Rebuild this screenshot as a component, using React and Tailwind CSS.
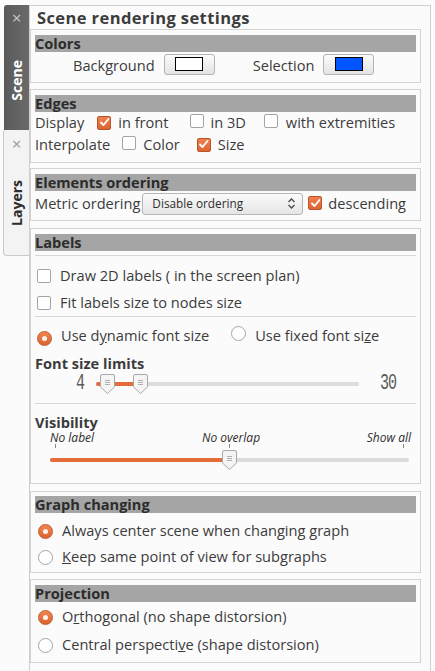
import React from "react";

const font = { fontFamily: '"Open Sans", "DejaVu Sans", sans-serif' };
const lcd = { fontFamily: '"Liberation Mono", monospace' };

function Check({ on }) {
  return on ? (
    <span className="inline-flex items-center justify-center w-[14px] h-[14px] rounded-[2px] border border-[#b8542b] bg-gradient-to-b from-[#f0804d] to-[#dd6531] shrink-0">
      <svg width="11" height="11" viewBox="0 0 11 11">
        <path d="M2 5.5 L4.5 8 L9.5 2" fill="none" stroke="#fff" strokeWidth="1.8" strokeLinecap="round" strokeLinejoin="round" />
      </svg>
    </span>
  ) : (
    <span className="inline-block w-[14px] h-[14px] rounded-[2px] border border-[#a4a4a4] bg-white shrink-0" />
  );
}

function Radio({ on }) {
  return on ? (
    <span className="inline-flex items-center justify-center w-[15px] h-[15px] rounded-full border border-[#c45a2d] bg-gradient-to-b from-[#f08550] to-[#db6432] shrink-0">
      <span className="w-[5px] h-[5px] rounded-full bg-[#fff3ee]" />
    </span>
  ) : (
    <span className="inline-block w-[15px] h-[15px] rounded-full border border-[#a6a6a6] bg-white shrink-0" />
  );
}

function Header({ children }) {
  return (
    <div className="h-[17px] bg-[#a5a5a5] text-[14.6px] leading-[17px] font-bold text-[#2c2c2c]">
      {children}
    </div>
  );
}

function Box({ className = "", children }) {
  return (
    <div className={`border border-[#d3d3d3] px-[4px] pt-[5px] shrink-0 ${className}`}>{children}</div>
  );
}

function Handle() {
  return (
    <svg width="15" height="20" viewBox="0 0 15 20">
      <path d="M2 0.5 H13 Q14.5 0.5 14.5 2 V13 L7.5 19.5 L0.5 13 V2 Q0.5 0.5 2 0.5 Z" fill="#f4f4f4" stroke="#a9a9a9" />
      <path d="M5 6.5 H10 M5 8.5 H10 M5 10.5 H10" stroke="#b0b0b0" strokeWidth="1" />
    </svg>
  );
}

function ColorButton({ color }) {
  return (
    <span className="inline-flex items-center justify-center w-[51px] h-[21px] rounded-[3px] border border-[#b3b3b3] bg-gradient-to-b from-[#fbfbfb] to-[#e4e4e4]">
      <span className="w-[28px] h-[14px] border border-black" style={{ background: color }} />
    </span>
  );
}

export default function App() {
  return (
    <div className="w-[435px] h-[671px] bg-[#fbfbfb] flex text-[#3c3c3c] overflow-hidden" style={font}>
      {/* Side tabs */}
      <div className="w-[29px] pt-[5px] flex flex-col shrink-0">
        <div className="ml-[4px] w-[25px] h-[125px] bg-gradient-to-r from-[#5a5a5a] to-[#6a6a6a] rounded-tl-[3px] flex flex-col items-center pt-[4px]">
          <span className="text-[#c9c9c9] text-[17px] leading-[17px]">×</span>
          <span className="mt-[34px] [writing-mode:vertical-rl] rotate-180 text-white font-bold text-[14px] leading-[16px]">Scene</span>
        </div>
        <div className="ml-[3px] w-[26px] h-[126px] bg-[#f3f3f3] border border-r-0 border-t-0 border-[#c9c9c9] rounded-bl-[4px] flex flex-col items-center pt-[5px]">
          <span className="text-[#9a9a9a] text-[17px] leading-[17px]">×</span>
          <span className="mt-[28px] [writing-mode:vertical-rl] rotate-180 text-[#2c2c2c] font-bold text-[14px] leading-[16px]">Layers</span>
        </div>
      </div>

      {/* Main panel */}
      <div className="mt-[5px] mr-[4px] flex-1 border-l border-t border-r border-[#cfcfcf] flex flex-col pr-[9px] text-[14.6px]">
        <div className="h-[23px] pl-[7px] text-[16.5px] leading-[24px] tracking-[0.4px] font-bold text-[#3c3c3c] shrink-0">
          Scene rendering settings
        </div>

        {/* Colors */}
        <Box className="h-[54px]">
          <Header>Colors</Header>
          <div className="flex items-center h-[21px] mt-[3px]">
            <span className="ml-[38px]">Background</span>
            <span className="ml-[9px]"><ColorButton color="#ffffff" /></span>
            <span className="ml-[38px]">Selection</span>
            <span className="ml-[9px]"><ColorButton color="#0055ff" /></span>
          </div>
        </Box>

        {/* Edges */}
        <Box className="h-[74px] mt-[6px]">
          <Header>Edges</Header>
          <div className="flex items-center h-[22px]">
            <span>Display</span>
            <span className="ml-[13px]"><Check on /></span>
            <span className="ml-[7px]">in front</span>
            <span className="ml-[21px]"><Check /></span>
            <span className="ml-[7px]">in 3D</span>
            <span className="ml-[18px]"><Check /></span>
            <span className="ml-[8px]">with extremities</span>
          </div>
          <div className="flex items-center h-[22px]">
            <span>Interpolate</span>
            <span className="ml-[12px]"><Check /></span>
            <span className="ml-[7px]">Color</span>
            <span className="ml-[17px]"><Check on /></span>
            <span className="ml-[7px]">Size</span>
          </div>
        </Box>

        {/* Elements ordering */}
        <Box className="h-[53px] mt-[5px]">
          <Header>Elements ordering</Header>
          <div className="flex items-center h-[23px] mt-[1px]">
            <span>Metric ordering</span>
            <div className="ml-[2px] w-[161px] h-[22px] rounded-[3px] border border-[#b5b5b5] bg-gradient-to-b from-[#fbfbfb] to-[#e5e5e5] flex items-center pl-[9px] pr-[6px] text-[11.8px] text-[#2e2e2e]">
              <span className="flex-1">Disable ordering</span>
              <svg width="9" height="13" viewBox="0 0 9 13">
                <path d="M1.5 5 L4.5 2 L7.5 5 M1.5 8 L4.5 11 L7.5 8" fill="none" stroke="#4a4a4a" strokeWidth="1.3" />
              </svg>
            </div>
            <span className="ml-[5px]"><Check on /></span>
            <span className="ml-[6px]">descending</span>
          </div>
        </Box>

        {/* Labels */}
        <Box className="h-[256px] mt-[7px]">
          <Header>Labels</Header>
          <div className="h-px bg-[#d6d6d6] mt-[4px]" />
          <div className="flex items-center h-[27px] mt-[6px] pl-[2px] gap-[9px]">
            <Check />
            <span>Draw 2D labels ( in the screen plan)</span>
          </div>
          <div className="flex items-center h-[27px] pl-[2px] gap-[9px]">
            <Check />
            <span>Fit labels size to nodes size</span>
          </div>
          <div className="h-px bg-[#d6d6d6]" />
          <div className="flex items-center h-[34px] mt-[2px]">
            <span className="ml-[2px]"><Radio on /></span>
            <span className="ml-[9px]">Use d<span className="underline">y</span>namic font size</span>
            <span className="ml-[22px]"><Radio /></span>
            <span className="ml-[9px]">Use fixed font si<span className="underline">z</span>e</span>
          </div>
          <div className="leading-[18px] font-bold mt-[1px]">Font size limits</div>
          <div className="flex items-center h-[24px]">
            <span className="ml-[41px] w-[10px] text-[15px] leading-[16px] scale-y-150 text-[#5a5a5a]" style={lcd}>4</span>
            <div className="relative ml-[10px] w-[263px] h-[20px]">
              <div className="absolute left-0 right-0 top-[8px] h-[4px] rounded-full bg-[#dcdcdc]" />
              <div className="absolute left-0 w-[45px] top-[8px] h-[4px] rounded-full bg-[#e46c39]" />
              <div className="absolute left-[4px] top-0"><Handle /></div>
              <div className="absolute left-[37px] top-0"><Handle /></div>
            </div>
            <span className="ml-[21px] text-[15px] leading-[16px] scale-y-150 tracking-[-1px] text-[#5a5a5a]" style={lcd}>30</span>
          </div>
          <div className="h-px bg-[#d6d6d6] mt-[7px]" />
          <div className="h-[13px] leading-[13px] font-bold mt-[12px]">Visibility</div>
          <div className="relative h-[50px]">
            <span className="absolute left-[15px] top-[2px] text-[12px] leading-[13px] italic text-[#2e2e2e]">No label</span>
            <span className="absolute left-[167px] top-[2px] text-[12px] leading-[13px] italic text-[#2e2e2e]">No overlap</span>
            <span className="absolute right-[5px] top-[2px] text-[12px] leading-[13px] italic text-[#2e2e2e]">Show all</span>
            <div className="absolute left-[20px] top-[15px] w-px h-[4px] bg-[#888]" />
            <div className="absolute left-[194px] top-[15px] w-px h-[4px] bg-[#888]" />
            <div className="absolute left-[368px] top-[15px] w-px h-[4px] bg-[#888]" />
            <div className="absolute left-[15px] right-[7px] top-[29px] h-[4px] rounded-full bg-[#dcdcdc]" />
            <div className="absolute left-[15px] w-[180px] top-[29px] h-[4px] rounded-full bg-[#e46c39]" />
            <div className="absolute left-[187px] top-[21px]"><Handle /></div>
          </div>
        </Box>

        {/* Graph changing */}
        <Box className="h-[82px] mt-[7px] !pt-[4px]">
          <Header>Graph changing</Header>
          <div className="flex items-center h-[26px] mt-[5px] pl-[3px] gap-[9px]">
            <Radio on />
            <span>Always center scene when changing <span className="underline">g</span>raph</span>
          </div>
          <div className="flex items-center h-[26px] pl-[3px] gap-[9px]">
            <Radio />
            <span><span className="underline">K</span>eep same point of view for subgraphs</span>
          </div>
        </Box>

        {/* Projection */}
        <Box className="h-[84px] mt-[6px]">
          <Header>Projection</Header>
          <div className="flex items-center h-[28px] mt-[1px] pl-[3px] gap-[9px]">
            <Radio on />
            <span>O<span className="underline">r</span>thogonal (no shape distorsion)</span>
          </div>
          <div className="flex items-center h-[28px] pl-[3px] gap-[9px]">
            <Radio />
            <span>Central perspecti<span className="underline">v</span>e (shape distorsion)</span>
          </div>
        </Box>
      </div>
    </div>
  );
}
